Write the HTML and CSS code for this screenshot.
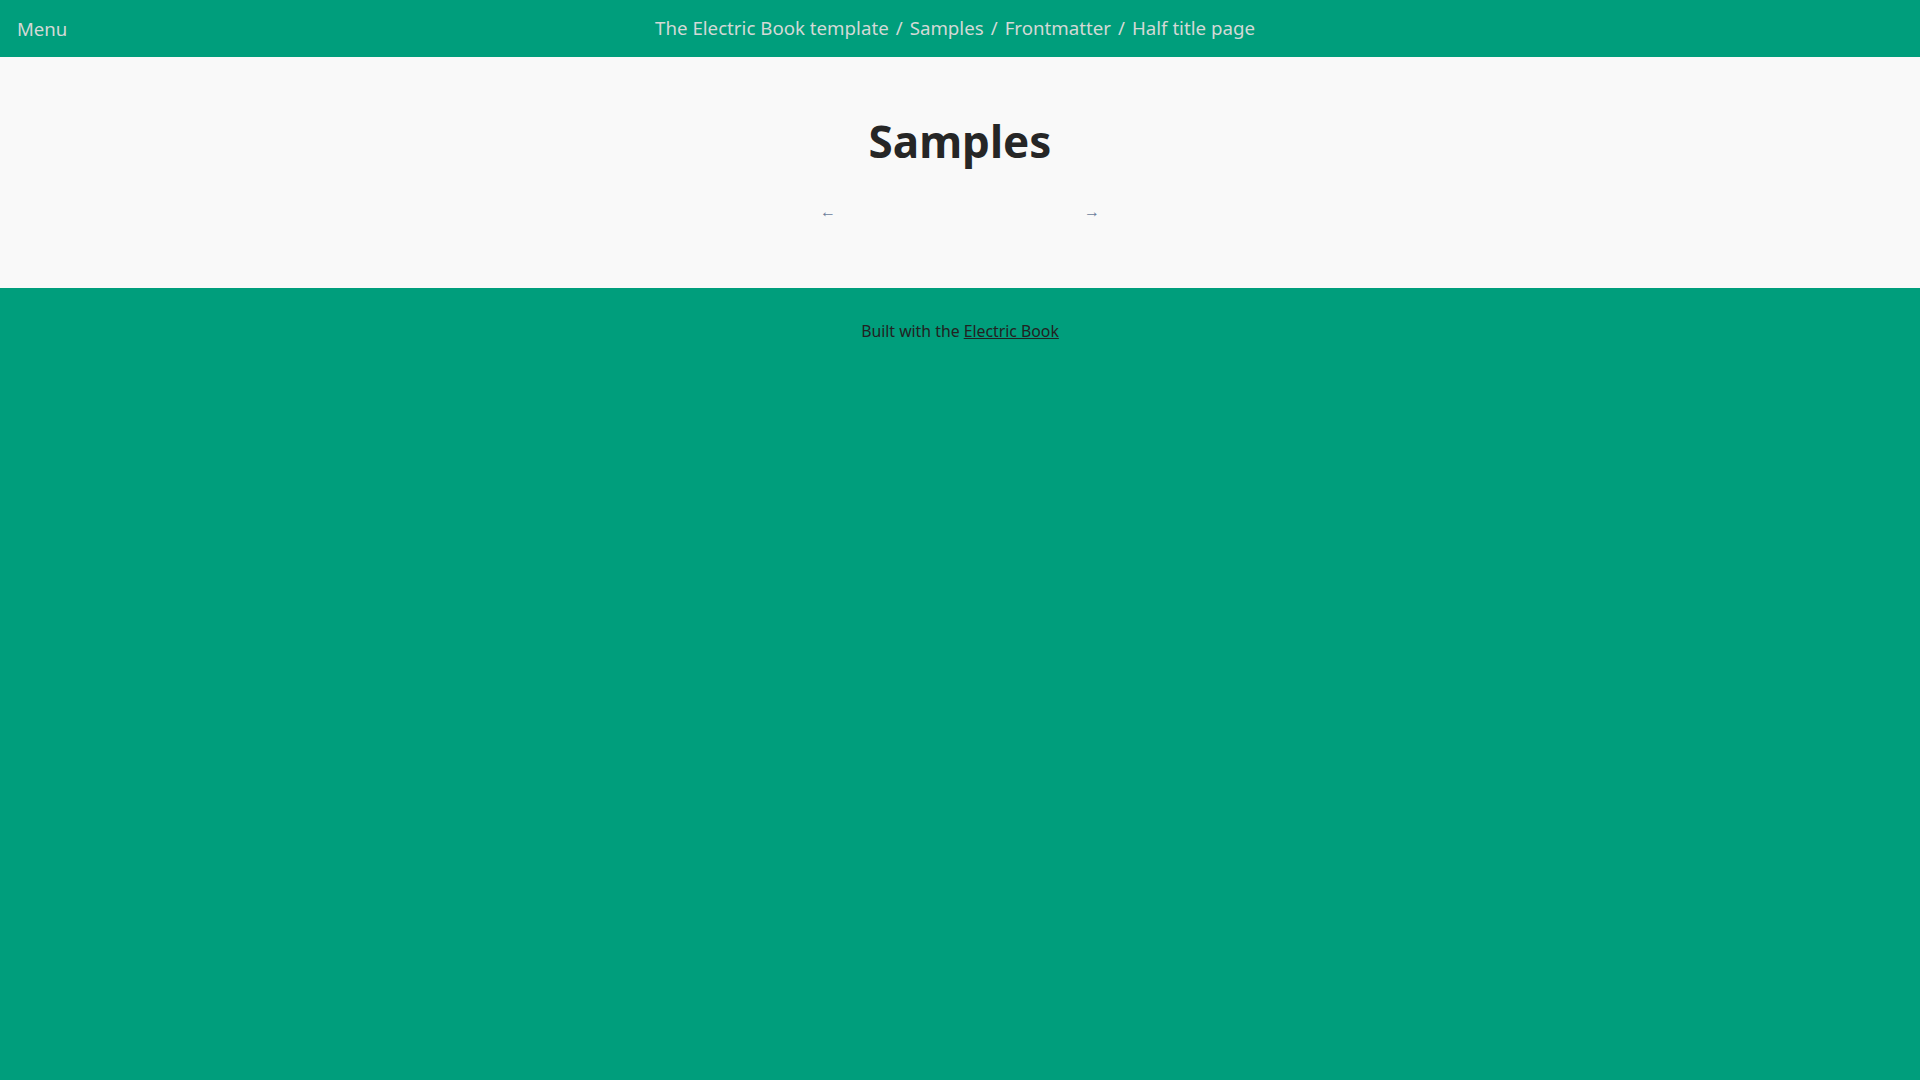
FILE: index.html
```html
<!DOCTYPE html>
<html lang="en">
<head>
<meta charset="utf-8">
<title>Half title page</title>
<link rel="stylesheet" href="styles.css">
</head>
<body>
<header class="nav-bar">
  <a class="menu" href="#">Menu</a>
  <nav class="breadcrumbs">
    <a href="#">The Electric Book template</a><span class="sep">/</span><a href="#">Samples</a><span class="sep">/</span><a href="#">Frontmatter</a><span class="sep">/</span><span>Half title page</span>
  </nav>
</header>
<main class="content">
  <h1 class="title">Samples</h1>
  <div class="page-nav">
    <a class="prev" href="#">&larr;</a>
    <a class="next" href="#">&rarr;</a>
  </div>
</main>
<footer class="footer">
  <p>Built with the <a href="#">Electric Book</a></p>
</footer>
</body>
</html>
```
FILE: styles.css
```css
html, body {
  margin: 0;
  padding: 0;
  height: 100%;
}
body {
  background: #009e7c;
  font-family: "Noto Sans", "Open Sans", sans-serif;
  color: #222;
}
a { color: inherit; text-decoration: none; }
.nav-bar {
  height: 57px;
  background: #009e7c;
  position: relative;
  display: flex;
  align-items: center;
  justify-content: center;
  color: #d4d9d6;
  font-size: 18.7px;
}
.menu {
  position: absolute;
  left: 17px;
  top: 16px;
  font-size: 18.6px;
}
.breadcrumbs {
  display: flex;
  align-items: center;
  margin-top: -3px;
  margin-right: 10px;
}
.sep {
  margin: 0 7px;
}
.content {
  background: #f9f9f9;
  height: 231px;
  display: flex;
  flex-direction: column;
  align-items: center;
}
.title {
  margin: 0;
  margin-top: 58px;
  font-size: 44px;
  font-weight: 700;
  color: #262626;
  line-height: 1.2;
}
.page-nav {
  margin-top: 32px;
  width: 280px;
  display: flex;
  justify-content: space-between;
  color: #6b7d9c;
  font-size: 16px;
}
.footer {
  text-align: center;
  font-size: 15.8px;
  color: #222;
}
.footer p {
  margin: 0;
  padding-top: 32px;
}
.footer a {
  text-decoration: underline;
}
```
